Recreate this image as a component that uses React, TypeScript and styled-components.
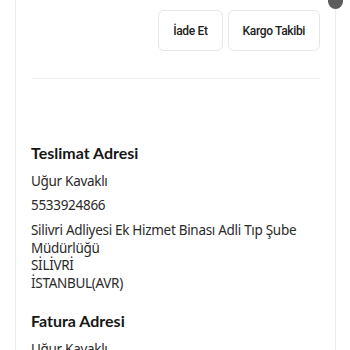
import React from "react";
import styled, { createGlobalStyle } from "styled-components";

const GlobalStyle = createGlobalStyle`
  html, body {
    margin: 0;
    padding: 0;
    background: #ffffff;
  }
  * {
    box-sizing: border-box;
  }
`;

type Address = {
  name: string;
  phone: string;
  lines: string[];
};

const delivery: Address = {
  name: "Uğur Kavaklı",
  phone: "5533924866",
  lines: [
    "Silivri Adliyesi Ek Hizmet Binası Adli Tıp Şube Müdürlüğü",
    "SİLİVRİ",
    "İSTANBUL(AVR)",
  ],
};

const App: React.FC = () => {
  return (
    <>
      <GlobalStyle />
      <Page>
        <Card>
          <ScrollDot />
          <Actions>
            <ActionButton>İade Et</ActionButton>
            <ActionButton>Kargo Takibi</ActionButton>
          </Actions>
          <Divider />
          <Section $gap={62}>
            <SectionTitle>Teslimat Adresi</SectionTitle>
            <InfoLine>{delivery.name}</InfoLine>
            <InfoLine>{delivery.phone}</InfoLine>
            <AddressBlock>
              {delivery.lines.map((l) => (
                <div key={l}>{l}</div>
              ))}
            </AddressBlock>
          </Section>
          <Section $gap={17}>
            <SectionTitle>Fatura Adresi</SectionTitle>
            <InfoLine>{delivery.name}</InfoLine>
          </Section>
        </Card>
      </Page>
    </>
  );
};

const Page = styled.div`
  width: 350px;
  height: 350px;
  overflow: hidden;
  padding: 0 14px 0 15px;
`;

const Card = styled.div`
  position: relative;
  width: 321px;
  border: 1px solid #ececec;
  border-top: none;
  background: #ffffff;
  padding: 10px 15px 0 15px;
  font-family: "Noto Sans", "Open Sans", sans-serif;
  color: #1b1b1b;
`;

const ScrollDot = styled.div`
  position: absolute;
  top: 0;
  right: -8px;
  width: 15px;
  height: 9px;
  border-radius: 0 0 8px 8px;
  background: #5c5c5c;
`;

const Actions = styled.div`
  display: flex;
  justify-content: flex-end;
  gap: 5px;
`;

const ActionButton = styled.button`
  height: 41px;
  padding: 0 14px;
  border: 1px solid #e6e6e6;
  border-radius: 6px;
  background: #ffffff;
  font-family: Roboto, "Liberation Sans", sans-serif;
  font-size: 12px;
  font-weight: 500;
  letter-spacing: -0.35px;
  color: #222222;
  cursor: pointer;
`;

const Divider = styled.div`
  height: 1px;
  background: #f2f2f2;
  margin: 27px 0 0 1px;
`;

const Section = styled.div<{ $gap: number }>`
  display: flex;
  flex-direction: column;
  margin-top: ${({ $gap }) => $gap}px;
`;

const SectionTitle = styled.div`
  font-family: Lato, "Noto Sans", sans-serif;
  font-size: 16px;
  font-weight: 700;
  line-height: 24px;
  margin-bottom: 4px;
  color: #161616;
`;

const InfoLine = styled.div`
  font-size: 13.5px;
  letter-spacing: -0.3px;
  line-height: 24px;
  color: #2a2a2a;
`;

const AddressBlock = styled.div`
  margin-top: 5px;
  font-size: 13.5px;
  letter-spacing: -0.3px;
  line-height: 17.5px;
  color: #2a2a2a;
`;

export default App;
